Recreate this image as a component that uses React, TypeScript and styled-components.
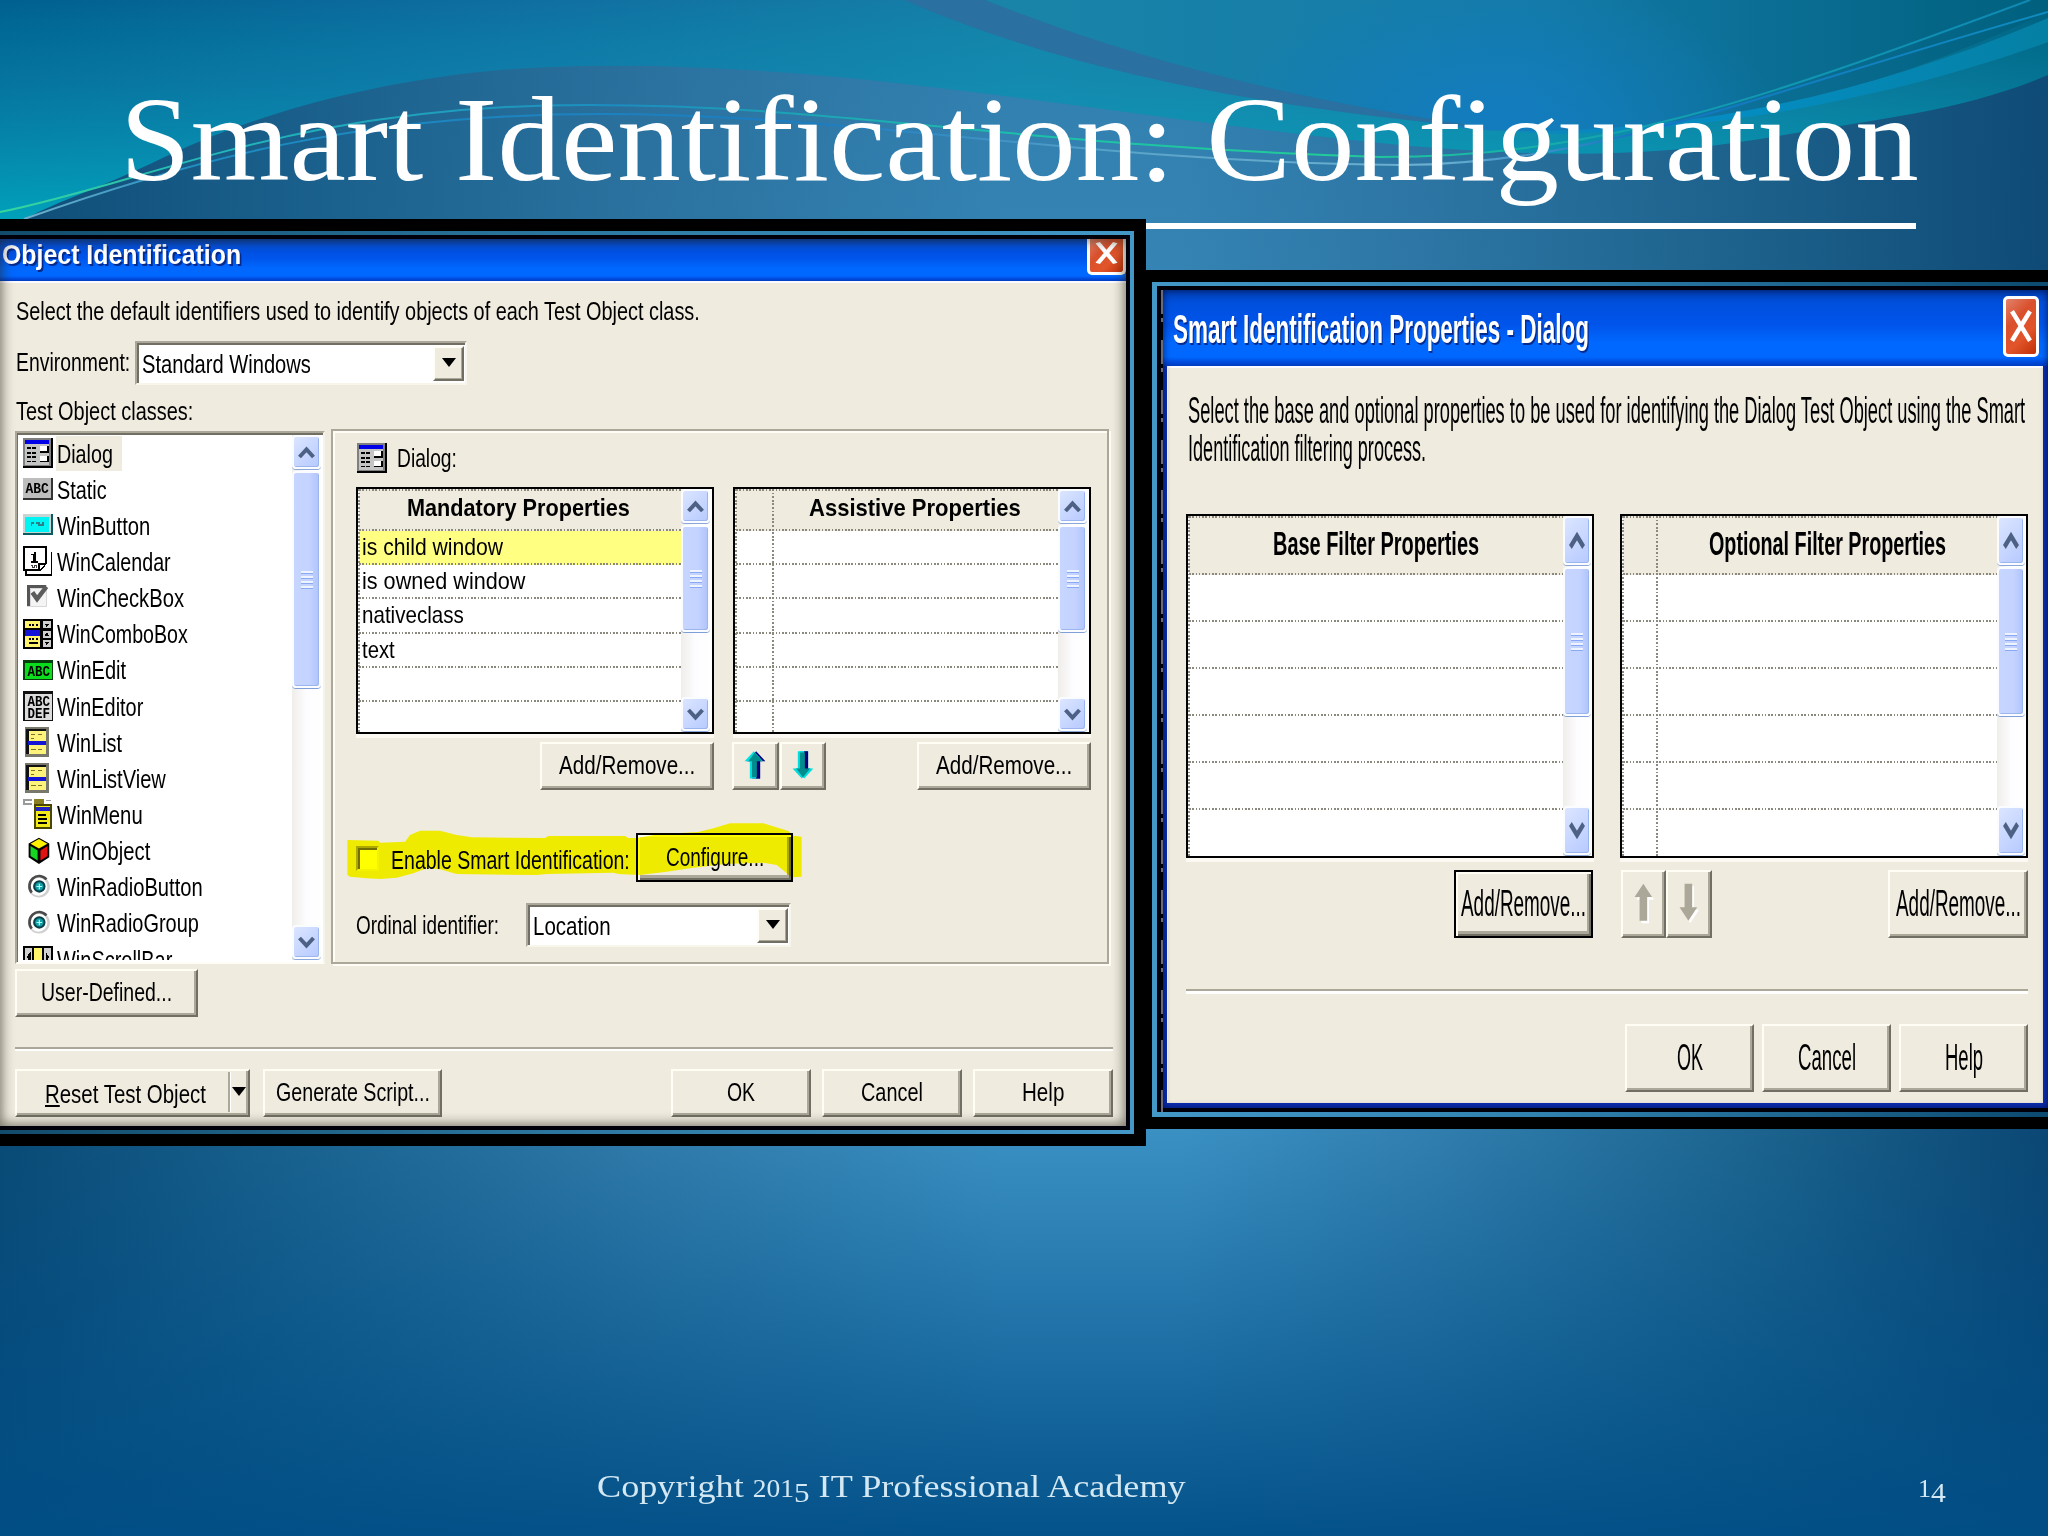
import React, { useLayoutEffect, useRef, useState } from "react";
import styled, { createGlobalStyle, css } from "styled-components";

const face = "#efebdf";
const shade = "#aca899";
const dark = "#716f64";
const light = "#fffdf4";

const GlobalStyle = createGlobalStyle`
  html, body { margin: 0; padding: 0; }
  body { width: 2048px; height: 1536px; overflow: hidden; font-family: "Liberation Sans", Arial, sans-serif; color: #000; }
  *, *::before, *::after { box-sizing: border-box; }
`;

/* ---------- text squeezed to a given width ---------- */

const FitBox = styled.span<{ $w: number; $size: number; $bold?: boolean; $lh?: number }>`
  display: block;
  flex: none;
  width: ${(p) => p.$w}px;
  height: ${(p) => p.$lh ?? Math.round(p.$size * 1.2)}px;
  line-height: ${(p) => p.$lh ?? Math.round(p.$size * 1.2)}px;
  font-size: ${(p) => p.$size}px;
  font-weight: ${(p) => (p.$bold ? 700 : 400)};
  white-space: nowrap;
`;

const FitInner = styled.span`
  display: inline-block;
  transform-origin: 0 50%;
`;

type FitProps = { w: number; size?: number; bold?: boolean; lh?: number; dy?: number; children: React.ReactNode };

function Fit({ w, size = 25, bold, lh, dy = 0, children }: FitProps) {
  const ref = useRef<HTMLSpanElement>(null);
  const [scale, setScale] = useState(1);
  useLayoutEffect(() => {
    if (ref.current) setScale(w / ref.current.offsetWidth);
  }, [w, size]);
  return (
    <FitBox $w={w} $size={size} $bold={bold} $lh={lh}>
      <FitInner ref={ref} style={{ transform: `translateY(${dy}px) scaleX(${scale})` }}>
        {children}
      </FitInner>
    </FitBox>
  );
}

/* ---------- slide ---------- */

const Slide = styled.main`
  position: relative;
  width: 2048px;
  height: 1536px;
  overflow: hidden;
  background:
    linear-gradient(180deg, rgba(0, 80, 136, 0) 1080px, rgba(0, 78, 134, 0.94) 1536px),
    linear-gradient(180deg, rgba(22, 84, 128, 0.36) 0, rgba(22, 84, 128, 0.3) 280px, rgba(22, 84, 128, 0) 900px),
    linear-gradient(90deg, #0b4a74 0, #1c6591 300px, #3580ae 640px, #4198ca 1000px, #4198ca 1180px, #3785b5 1420px, #1f6790 1750px, #0c4672 2048px);
`;

const Backdrop = styled.svg`
  position: absolute;
  inset: 0;
  width: 2048px;
  height: 300px;
`;

const Heading = styled.h1`
  position: absolute;
  left: 127px;
  top: 67px;
  width: 1789px;
  height: 162px;
  margin: 0;
  border-bottom: 6px solid #fff;
  color: #fff;
  font-family: "Liberation Serif", "Times New Roman", serif;
`;

const HeadingText = styled.div`
  margin-left: -7px;
`;

const Footer = styled.footer`
  position: absolute;
  left: 597px;
  right: 102px;
  top: 1466px;
  display: flex;
  justify-content: space-between;
  color: #d3e8f3;
  font-family: "Liberation Serif", "Times New Roman", serif;
`;

const Num = styled.span<{ $drop?: boolean }>`
  font-size: ${(p) => (p.$drop ? 0.86 : 0.76)}em;
  line-height: 0;
  position: relative;
  top: ${(p) => (p.$drop ? "0.17em" : "0")};
`;

/* ---------- window chrome ---------- */

const Frame = styled.section<{ $right?: boolean }>`
  position: absolute;
  background: #000;
  ${(p) =>
    p.$right
      ? css`left: 1141px; top: 270px; width: 907px; height: 859px; padding: 12px 0 12px 11px;`
      : css`left: 0; top: 219px; width: 1146px; height: 927px; padding: 12px 12px 12px 0;`}
`;

const Rim = styled.div<{ $right?: boolean }>`
  height: 100%;
  background: ${(p) =>
    p.$right
      ? "linear-gradient(90deg, #4398c8 0, #2f80ae 45%, #0c4a70 100%)"
      : "linear-gradient(90deg, #124c6c 0, #2c77a0 50%, #4398c8 100%)"};
  padding: ${(p) => (p.$right ? "4px 0 5px 5px" : "4px 4px 4px 0")};
`;

const RimInner = styled.div<{ $right?: boolean }>`
  height: 100%;
  background: #00000a;
  padding: ${(p) => (p.$right ? "4px 0 4px 3px" : "4px 4px 4px 0")};
  ${(p) =>
    p.$right &&
    css`background: repeating-linear-gradient(180deg, #6d6a78 0 24px, #000 24px 28px, #6d6a78 28px 32px, #000 32px 50px) 4px 4px / 2px 100% no-repeat #00000a; padding-left: 6px;`}
`;

const Window = styled.div<{ $right?: boolean }>`
  position: relative;
  height: 100%;
  display: flex;
  flex-direction: column;
  background: ${(p) => (p.$right ? "#0a2fb4" : face)};
  &::after {
    content: "";
    position: absolute;
    inset: 0;
    pointer-events: none;
    box-shadow: ${(p) =>
      p.$right ? "inset 0 0 6px 1px rgba(0,0,40,.55)" : "inset 0 0 12px 2px rgba(40,38,25,.6)"};
  }
`;

const TitleBar = styled.header<{ $right?: boolean }>`
  flex: none;
  display: flex;
  justify-content: space-between;
  height: ${(p) => (p.$right ? 76 : 42)}px;
  padding: ${(p) => (p.$right ? "6px 9px 0 10px" : "0 0 0 2px")};
  color: #fff;
  text-shadow: 2px 2px 0 #062a8c;
  background: linear-gradient(180deg, #003fb4 0, #0050de 18%, #0054ea 45%, #0068ff 70%, #0068ff 88%, #0046d6 96%, #003cc0 100%);
`;

const TitleText = styled.div<{ $top: number }>`
  padding-top: ${(p) => p.$top}px;
`;

const CloseBox = styled.button<{ $right?: boolean }>`
  flex: none;
  width: ${(p) => (p.$right ? 36 : 39)}px;
  height: ${(p) => (p.$right ? 61 : 36)}px;
  padding: 0;
  border: 3px solid #fff;
  border-top-width: ${(p) => (p.$right ? 3 : 0)}px;
  border-radius: ${(p) => (p.$right ? "5px" : "0 0 5px 5px")};
  background: linear-gradient(135deg, #e2836c 0, #d9502c 35%, #e2542a 65%, #c03008 100%);
  svg { display: block; width: 100%; height: 100%; }
`;

const Close = ({ right }: { right?: boolean }) => (
  <CloseBox $right={right}>
    <svg viewBox="0 0 30 54" preserveAspectRatio="none">
      <path d={right ? "M6 12L24 41M24 12L6 41" : "M7 6L23 40M23 6L7 40"} stroke="#fff" strokeWidth="4.5" fill="none" />
    </svg>
  </CloseBox>
);

const Body = styled.div<{ $right?: boolean }>`
  flex: 1;
  display: flex;
  flex-direction: column;
  background: ${face};
  border-top: 2px solid #fbfaff;
  ${(p) =>
    p.$right
      ? css`margin: 0 5px 5px 4px; padding: 24px 15px 0 19px; border-left: 1px solid #fff; padding-left: 18px;`
      : css`padding: 0 13px 0 15px;`}
`;

const Row = styled.div<{ $h: number; $mt?: number; $gap?: number; $pl?: number; $between?: boolean }>`
  flex: none;
  display: flex;
  align-items: center;
  height: ${(p) => p.$h}px;
  margin-top: ${(p) => p.$mt ?? 0}px;
  gap: ${(p) => p.$gap ?? 0}px;
  padding-left: ${(p) => p.$pl ?? 0}px;
  justify-content: ${(p) => (p.$between ? "space-between" : "flex-start")};
`;

const Rule = styled.hr<{ $mt: number; $h: number }>`
  flex: none;
  width: 100%;
  margin: ${(p) => p.$mt}px 0 0;
  height: ${(p) => p.$h}px;
  border: 0;
  border-top: 2px solid ${shade};
  background: #fff;
`;

const Btn = styled.button<{ $w: number; $h?: number; $focus?: boolean }>`
  flex: none;
  display: flex;
  align-items: center;
  justify-content: center;
  width: ${(p) => p.$w}px;
  height: ${(p) => p.$h ?? 48}px;
  padding: 0 0 2px;
  font: inherit;
  color: #000;
  background: ${face};
  border: 2px solid;
  border-color: ${(p) => (p.$focus ? "#000" : `${light} ${dark} ${dark} ${light}`)};
  box-shadow: ${(p) =>
    p.$focus
      ? `inset 2px 2px 0 ${light}, inset -2px -2px 0 ${dark}, inset -4px -5px 0 ${shade}`
      : `inset -2px -2px 0 ${shade}`};
  svg { flex: none; }
`;

const SplitEnd = styled.span`
  flex: none;
  display: flex;
  align-items: center;
  justify-content: center;
  height: 40px;
  width: 20px;
  border-left: 2px solid ${shade};
  box-shadow: inset 1px 0 0 #fff;
`;

const Combo = styled.div<{ $w: number }>`
  flex: none;
  display: flex;
  align-items: center;
  justify-content: space-between;
  width: ${(p) => p.$w}px;
  height: 44px;
  padding: 1px 1px 1px 5px;
  background: #fff;
  border: 2px solid;
  border-color: ${shade} #f8f5ea #f8f5ea ${shade};
  box-shadow: inset 2px 2px 0 ${dark};
`;

const DropBtn = styled.span`
  display: flex;
  align-items: center;
  justify-content: center;
  width: 31px;
  height: 35px;
  background: ${face};
  border: 2px solid;
  border-color: ${light} ${dark} ${dark} ${light};
  box-shadow: inset -1px -1px 0 ${shade};
`;

const Caret = () => (
  <svg width="14" height="10" viewBox="0 0 14 10">
    <path d="M0 0H14L7 9Z" fill="#000" />
  </svg>
);

/* ---------- scrollbar ---------- */

const Track = styled.div<{ $w: number; $mr: number }>`
  flex: none;
  display: flex;
  flex-direction: column;
  width: ${(p) => p.$w}px;
  margin-right: ${(p) => p.$mr}px;
  padding: 0 0 1px;
  background: linear-gradient(90deg, #f0eeea, #fdfcff 50%, #fff);
`;

const Cap = styled.span<{ $h: number; $end?: boolean }>`
  flex: none;
  display: flex;
  align-items: center;
  justify-content: center;
  height: ${(p) => p.$h}px;
  margin-top: ${(p) => (p.$end ? "auto" : 0)};
  border: 2px solid #fbfcff;
  border-radius: 4px;
  background: linear-gradient(135deg, #dbe5ff, #b6caff);
  box-shadow: inset -1px -1px 0 #9db5ee, 0 1px 0 #8ba6d8;
`;

const Thumb = styled.span<{ $h: number }>`
  flex: none;
  display: flex;
  flex-direction: column;
  align-items: center;
  justify-content: center;
  gap: 2px;
  height: ${(p) => p.$h}px;
  margin-top: 2px;
  border: 2px solid #fbfcff;
  border-radius: 4px;
  background: linear-gradient(90deg, #c6d6ff, #c4d3ff 60%, #b0c4fb);
  box-shadow: inset -1px -1px 0 #9db5ee, 0 1px 0 #7f9fd8;
`;

const Grip = styled.i`
  width: 12px;
  height: 3px;
  background: #eef4ff;
  border-bottom: 1px solid #8aa9f5;
`;

function Scroll({ w, cap, thumb, tall, mr = 0 }: { w: number; cap: number; thumb: number; tall?: boolean; mr?: number }) {
  const size = tall ? { width: 16, height: 19 } : { width: 17, height: 13 };
  return (
    <Track $w={w} $mr={mr}>
      <Cap $h={cap}>
        <svg {...size} viewBox="0 0 17 13" preserveAspectRatio="none">
          <path d="M1.5 11L8.5 3.500L15.500 11" fill="none" stroke="#4d6185" strokeWidth="4" />
        </svg>
      </Cap>
      <Thumb $h={thumb}>
        <Grip /><Grip /><Grip /><Grip />
      </Thumb>
      <Cap $h={cap} $end>
        <svg {...size} viewBox="0 0 17 13" preserveAspectRatio="none">
          <path d="M1.5 2L8.500 9.500L15.500 2" fill="none" stroke="#4d6185" strokeWidth="4" />
        </svg>
      </Cap>
    </Track>
  );
}

/* ---------- class list ---------- */

const Main = styled.div`
  flex: none;
  display: flex;
  gap: 6px;
  height: 533px;
`;

const ListBox = styled.div`
  flex: none;
  display: flex;
  width: 310px;
  background: #fff;
  border: 2px solid;
  border-color: ${shade} #f6f3e8 #fffdf6 ${shade};
  box-shadow: inset 1px 2px 0 ${dark};
  padding: 2px 2px 2px 1px;
`;

const List = styled.ul`
  flex: 1;
  margin: 0;
  padding: 0 0 0 5px;
  list-style: none;
  overflow: hidden;
`;

const Item = styled.li`
  display: flex;
  align-items: center;
  height: 36.15px;
  gap: 3px;
  svg { flex: none; display: block; overflow: visible; }
`;

const ItemLabel = styled.span<{ $on?: boolean }>`
  display: flex;
  align-items: center;
  height: 35px;
  padding: 1px 9px 0 1px;
  background: ${(p) => (p.$on ? face : "transparent")};
`;

const Ico = ({ children, size = 30 }: { children: React.ReactNode; size?: number }) => (
  <svg width={size} height={size} viewBox="0 0 16 16" shapeRendering="crispEdges">
    {children}
  </svg>
);

const DialogIcon = () => (
  <Ico>
    <path d="M0 0H16V16H0Z" fill="#000" />
    <path d="M0 0H15V15H0Z" fill="#808080" />
    <path d="M1 1H14V14.4H1Z" fill="#c4c4c4" />
    <path d="M1 .8H14V3H1Z" fill="#0000e8" />
    <path d="M2 5H4V6H2ZM5 5H7V6H5ZM2 7.5H4V8.500H2ZM5 7.500H7V8.500H5ZM2 9.500H4V10.500H2ZM5 9.500H7V10.500H5ZM2 12H4V13H2ZM5 12H7V13H5Z" fill="#000" />
    <path d="M9 4.500H13V7H9ZM9 9.500H13V12H9Z" fill="#fff" />
    <path d="M13 4.500H14V8H9V7H13ZM13 9.500H14V13H9V12H13Z" fill="#000" />
  </Ico>
);

const IconText = styled.text`
  font-family: "Liberation Mono", monospace;
  font-weight: 700;
`;

const StaticIcon = () => (
  <Ico>
    <path d="M0 2H16V14H0Z" fill="#333" />
    <path d="M0 2H15V13H0Z" fill="#bdbdbd" />
    <IconText x="1.300" y="10.300" fontSize="7.600" textLength="12.500" lengthAdjust="spacingAndGlyphs">ABC</IconText>
  </Ico>
);

const ButtonIcon = () => (
  <Ico>
    <path d="M0 2H16V13.500H0Z" fill="#0b5c60" />
    <path d="M0 2H15V12.500H0Z" fill="#c8d4d4" />
    <path d="M1 3.500H14V11.500H1Z" fill="#00f4f4" />
    <path d="M4 6.500H6V7.500H7V6.500H9V7.500H10V6.500H11V8.500H8V7.500H5V8.500H4Z" fill="#2b7f86" />
  </Ico>
);

const CalendarIcon = () => (
  <Ico>
    <path d="M1.500 3V15.400H15.200V3" fill="#fff" stroke="#000" strokeWidth="1" />
    <path d="M.5 .5H12.500V9L9 13H.5Z" fill="#fff" stroke="#000" strokeWidth="1.100" />
    <path d="M8.500 13V9.500H12.500" fill="#fff" stroke="#000" strokeWidth="1.200" />
    <path d="M4.500 4H6V3H7V8H8V9H4.500V8H5.500V5H4.500Z" fill="#000" />
    <path d="M4 10.500H5V11.500H6V10.500H7V11.500" fill="none" stroke="#444" strokeWidth=".6" />
  </Ico>
);

const CheckIcon = () => (
  <Ico>
    <path d="M2 1H13V13H2Z" fill="#d8d8d8" />
    <path d="M2 1H12V2.500H3.700V12H2Z" fill="#555" />
    <path d="M4 3H12V12H4Z" fill="#f4f4f4" />
    <path d="M5 5L7.500 8.500L12.500 2" fill="none" stroke="#5c5c5c" strokeWidth="2.400" shapeRendering="auto" />
  </Ico>
);

const ComboIcon = () => (
  <Ico>
    <path d="M0 0H16V16H0Z" fill="#000" />
    <path d="M1 1.200H9V5H1ZM1 9H9V15H1Z" fill="#fff36b" />
    <path d="M1 6H9V9H1Z" fill="#1414d8" />
    <path d="M10.500 1.200H15V5H10.500ZM10.500 6.500H15V10H10.500ZM10.500 11H15V15H10.500Z" fill="#cfcfcf" />
    <path d="M3 2.800H4V3.800H3ZM5 2.800H6V3.800H5ZM7 2.800H8V3.800H7ZM3 10.300H4V11.300H3ZM5 10.300H6V11.300H5ZM7 10.300H8V11.300H7ZM3 12.500H8V13.300H3ZM11.500 2.500H14L12.700 4.500ZM11.500 9L12.700 7L14 9ZM11.500 12L12.700 14L14 12Z" fill="#000" />
  </Ico>
);

const EditIcon = () => (
  <Ico>
    <path d="M0 2.500H16V13.500H0Z" fill="#083c0c" />
    <path d="M1.300 4H15.500V12.800H1.300Z" fill="#0ade1c" />
    <IconText x="2.400" y="11" fontSize="7.600" textLength="12" lengthAdjust="spacingAndGlyphs">ABC</IconText>
  </Ico>
);

const EditorIcon = () => (
  <Ico>
    <path d="M0 0H16V16H0Z" fill="#111" />
    <path d="M1.300 1.600H15.400V15.600H1.300Z" fill="#dcdcdc" />
    <IconText x="2.400" y="8" fontSize="7.400" textLength="12" lengthAdjust="spacingAndGlyphs">ABC</IconText>
    <IconText x="2.400" y="14.600" fontSize="7.400" textLength="12" lengthAdjust="spacingAndGlyphs">DEF</IconText>
  </Ico>
);

const ListIcon = () => (
  <Ico>
    <path d="M1 0H14V16H1Z" fill="#77776c" />
    <path d="M1.700 1H12.500V14.500H1.700Z" fill="#111" />
    <path d="M3 2H12.500V14.500H3Z" fill="#fdf27a" />
    <path d="M2.500 7.500H12V9.800H2.500Z" fill="#1414d8" />
    <path d="M4 3.500H6.500V4.300H4ZM8 3.500H10V4.300H8ZM4 5.700H6V6.500H4ZM4 11.700H7V12.500H4ZM8 11.700H10V12.500H8Z" fill="#7d742a" />
  </Ico>
);

const MenuIcon = () => (
  <Ico>
    <path d="M0 0H5V3H0Z" fill="#9a9a9a" />
    <path d="M1 1H5V2H1Z" fill="#fff" />
    <path d="M6 0H11V3H6Z" fill="#8a7f22" />
    <path d="M12 .3H15V1.300H12Z" fill="#a0a0a8" />
    <path d="M6 2.500H15.500V16H6Z" fill="#4a4600" />
    <path d="M7 3.500H14.300V15H7Z" fill="#f2ea18" />
    <path d="M7 4.500H14.300V6.300H7Z" fill="#2222c4" />
    <path d="M8 8H12V9H8ZM8 10.200H13V11.200H8ZM8 12.500H13V13.500H8Z" fill="#000" />
  </Ico>
);

const CubeIcon = () => (
  <svg width="30" height="30" viewBox="0 0 16 16">
    <path d="M8.500 1.500L13.500 4.300V11L8.500 14.300L3.500 11V4.300Z" fill="#000" stroke="#000" />
    <path d="M8.500 1.600L13 4.100L8.500 6.700L4 4.100Z" fill="#fff200" />
    <path d="M4 5.300L7.800 7.700V13.100L4 10.600Z" fill="#17d322" />
    <path d="M13.100 5.300L9.300 7.700V13.100L13.100 10.600Z" fill="#e01212" />
  </svg>
);

const RadioIcon = () => (
  <svg width="30" height="30" viewBox="0 0 16 16">
    <circle cx="8.500" cy="7.800" r="5.800" fill="#cfcfcf" />
    <circle cx="8.200" cy="7.800" r="4.800" fill="#fff" />
    <path d="M4.700 11A5 5.200 0 0 1 12.500 4" fill="none" stroke="#4a4a4a" strokeWidth="1.400" />
    <circle cx="8.700" cy="7.700" r="3.300" fill="#083f48" />
    <circle cx="8.700" cy="7.700" r="2.200" fill="#12a0a8" />
    <path d="M8.700 6.200V9.200M7.200 7.700H10.200" stroke="#aff" strokeWidth=".6" />
  </svg>
);

const ScrollIcon = () => (
  <Ico>
    <path d="M0 1H16V15H0Z" fill="#000" />
    <path d="M1 2.200H5V14H1ZM11 2.200H15V14H11Z" fill="#d0d0d0" />
    <path d="M6 2.200H10V14H6Z" fill="#fff36b" />
    <path d="M4 4V10L2 7ZM12 4V10L14 7Z" fill="#000" />
  </Ico>
);

const classes: [string, number, () => React.ReactElement][] = [
  ["Dialog", 56, DialogIcon],
  ["Static", 50, StaticIcon],
  ["WinButton", 93, ButtonIcon],
  ["WinCalendar", 114, CalendarIcon],
  ["WinCheckBox", 127, CheckIcon],
  ["WinComboBox", 131, ComboIcon],
  ["WinEdit", 69, EditIcon],
  ["WinEditor", 86, EditorIcon],
  ["WinList", 65, ListIcon],
  ["WinListView", 109, ListIcon],
  ["WinMenu", 86, MenuIcon],
  ["WinObject", 93, CubeIcon],
  ["WinRadioButton", 146, RadioIcon],
  ["WinRadioGroup", 142, RadioIcon],
  ["WinScrollBar", 115, ScrollIcon],
];

/* ---------- property grids ---------- */

const hDots = "repeating-linear-gradient(90deg, #8b887e 0 1.6px, transparent 1.6px 3.3px)";
const vDots = "repeating-linear-gradient(180deg, #8b887e 0 1.8px, transparent 1.8px 3.6px)";

const Group = styled.div`
  flex: none;
  position: relative;
  width: 778px;
  height: 535px;
  margin-top: -2px;
  border: 2px solid ${shade};
  box-shadow: inset 2px 2px 0 #fffdf6, 2px 2px 0 #fffdf6;
  padding: 12px 16px 0 23px;
`;

const GridBox = styled.div<{ $w: number; $h: number }>`
  flex: none;
  display: flex;
  width: ${(p) => p.$w}px;
  height: ${(p) => p.$h}px;
  border: 2px solid #000;
  box-shadow: 0 4px 0 #fbf9f2;
  background: #fff;
`;

const Cells = styled.div<{ $split?: number }>`
  position: relative;
  flex: 1;
  overflow: hidden;
  padding-left: 1px;
  &::before, &::after {
    content: "";
    position: absolute;
    top: 0;
    bottom: 0;
    left: 0;
    width: 2px;
    background: ${vDots};
  }
  &::after { left: ${(p) => p.$split ?? 0}px; }
`;

const Head = styled.div<{ $h: number; $pl: number }>`
  height: ${(p) => p.$h}px;
  padding-left: ${(p) => p.$pl}px;
  display: flex;
  align-items: center;
  background: ${hDots} 0 100% / 100% 2px no-repeat, ${hDots} 0 0 / 100% 2px no-repeat, ${face};
`;

const Cell = styled.div<{ $h: number; $on?: boolean }>`
  height: ${(p) => p.$h}px;
  padding: 0 0 3px 3px;
  display: flex;
  align-items: center;
  background: ${hDots} 0 100% / 100% 2px no-repeat, ${(p) => (p.$on ? "#ffff82" : "#fff")};
`;

type GridProps = {
  tall?: boolean;
  title: string;
  titleW: number;
  titlePad: number;
  split?: number;
  rows?: [string, number][];
};

function PropGrid({ tall, title, titleW, titlePad, split, rows = [] }: GridProps) {
  const rowH = tall ? 47.1 : 34.2;
  return (
    <GridBox $w={tall ? 408 : 358} $h={tall ? 344 : 247}>
      <Cells $split={split}>
        <Head $h={tall ? 59 : 42} $pl={titlePad}>
          <Fit w={titleW} size={tall ? 33 : 24} bold dy={tall ? -2 : -3}>{title}</Fit>
        </Head>
        {[0, 1, 2, 3, 4, 5].map((i) => (
          <Cell key={i} $h={rowH} $on={i === 0 && rows.length > 0}>
            {rows[i] && <Fit w={rows[i][1]} size={24}>{rows[i][0]}</Fit>}
          </Cell>
        ))}
      </Cells>
      <Scroll w={tall ? 28 : 29} cap={tall ? 49 : 34} thumb={tall ? 149 : 107} tall={tall} mr={tall ? 1 : 2} />
    </GridBox>
  );
}

const CheckRow = styled.div`
  display: flex;
  align-items: center;
  height: 49px;
  margin-top: 43px;
`;

const CheckBox = styled.span`
  width: 23px;
  height: 25px;
  margin: 2px 12px 0 0;
  background: #fff;
  border: 2px solid;
  border-color: ${shade} #f5f2e6 #f5f2e6 ${shade};
  box-shadow: inset 2px 2px 0 ${dark};
`;

const Marker = styled.svg`
  position: absolute;
  left: -3px;
  top: 369px;
  width: 500px;
  height: 180px;
  mix-blend-mode: multiply;
  pointer-events: none;
`;

const Arrow = ({ down, off }: { down?: boolean; off?: boolean }) => {
  const shape = "M7 0L14 8H10V22H4V8H0Z";
  return (
    <svg width={off ? 24 : 25} height={off ? 42 : 31} viewBox="-2 -1 19 25" preserveAspectRatio="none">
      <g transform={down ? "translate(0 22) scale(1 -1)" : undefined}>
        <path d={shape} fill={off ? "#fff" : down ? "#00dcdc" : "#00007c"} transform={off ? `translate(1.5 ${down ? -1.5 : 1.5})` : "translate(1 0)"} />
        {!off && <path d={shape} fill={down ? "#00dcdc" : "#00e0e0"} transform="translate(-.8 0)" />}
        {!off && <path d="M8 6H11V22H8Z" fill="#00007c" />}
        <path d={off ? shape : "M7 1L12.500 8H8.500V21H4.800V8H2Z"} fill={off ? shade : "#008c8c"} />
      </g>
    </svg>
  );
};

const Paragraph = styled.div`
  flex: none;
  height: 75px;
  padding-left: 2px;
`;

const Gap = styled.span<{ $w: number }>`
  flex: none;
  width: ${(p) => p.$w}px;
`;

/* ---------- dialogs ---------- */

function ObjectIdentification() {
  return (
    <Frame>
      <Rim>
        <RimInner>
          <Window>
            <TitleBar>
              <TitleText $top={0}><Fit w={239} size={28} bold lh={31}>Object Identification</Fit></TitleText>
              <Close />
            </TitleBar>
            <Body>
              <Row $h={56} $pl={1}>
                <Fit w={684}>Select the default identifiers used to identify objects of each Test Object class.</Fit>
              </Row>
              <Row $h={48} $gap={5} $pl={1}>
                <Fit w={114} dy={-1}>Environment:</Fit>
                <Combo $w={332}>
                  <Fit w={169} dy={1}>Standard Windows</Fit>
                  <DropBtn><Caret /></DropBtn>
                </Combo>
              </Row>
              <Row $h={44} $pl={1}>
                <Fit w={177} dy={2}>Test Object classes:</Fit>
              </Row>
              <Main>
                <ListBox>
                  <List>
                    {classes.map(([name, w, Icon], i) => (
                      <Item key={name}>
                        <Icon />
                        <ItemLabel $on={i === 0}><Fit w={w}>{name}</Fit></ItemLabel>
                      </Item>
                    ))}
                  </List>
                  <Scroll w={29} cap={34} thumb={217} />
                </ListBox>
                <Group>
                  <Row $h={30} $gap={10} $pl={1}>
                    <DialogIcon />
                    <Fit w={60}>Dialog:</Fit>
                  </Row>
                  <Row $h={247} $mt={14} $gap={19}>
                    <PropGrid
                      title="Mandatory Properties" titleW={223} titlePad={48}
                      rows={[["is child window", 141], ["is owned window", 163], ["nativeclass", 102], ["text", 33]]}
                    />
                    <PropGrid title="Assistive Properties" titleW={212} titlePad={73} split={37} />
                  </Row>
                  <Row $h={48} $mt={8} $pl={184}>
                    <Btn $w={174}><Fit w={136}>Add/Remove...</Fit></Btn>
                    <Gap $w={18} />
                    <Btn $w={47}><Arrow /></Btn>
                    <Gap $w={1} />
                    <Btn $w={46}><Arrow down /></Btn>
                    <Gap $w={91} />
                    <Btn $w={174}><Fit w={136}>Add/Remove...</Fit></Btn>
                  </Row>
                  <CheckRow>
                    <CheckBox />
                    <Fit w={239} dy={2}>Enable Smart Identification:</Fit>
                    <Gap $w={6} />
                    <Btn $w={157} $h={49} $focus><Fit w={98}>Configure...</Fit></Btn>
                  </CheckRow>
                  <Row $h={44} $mt={21}>
                    <Fit w={143}>Ordinal identifier:</Fit>
                    <Gap $w={27} />
                    <Combo $w={265}>
                      <Fit w={78} dy={1}>Location</Fit>
                      <DropBtn><Caret /></DropBtn>
                    </Combo>
                  </Row>
                  <Marker viewBox="0 0 1500 540">
                    <path
                      fill="#ffff00"
                      d="M52 120L145 122L150 128L225 125L240 105L270 92L330 92L380 105L425 112L645 114L655 108L885 108L895 114L920 114L985 103L1105 96L1150 85L1200 70L1300 70L1375 93L1390 107L1415 110V230L1385 232L1340 195L1300 188L1250 190L1185 192L1080 205L1010 215L930 225L865 222L850 218L650 222L620 225L380 222L330 208L290 205L250 220L200 233L150 237L110 235L60 230L52 225Z"
                    />
                  </Marker>
                </Group>
              </Main>
              <Row $h={48} $mt={5}>
                <Btn $w={183}><Fit w={131}>User-Defined...</Fit></Btn>
              </Row>
              <Rule $mt={30} $h={4} />
              <Row $h={48} $mt={18}>
                <Btn $w={235}>
                  <Gap $w={28} />
                  <Fit w={161} dy={2}><u>R</u>eset Test Object</Fit>
                  <Gap $w={22} />
                  <SplitEnd><Caret /></SplitEnd>
                </Btn>
                <Gap $w={13} />
                <Btn $w={179}><Fit w={154}>Generate Script...</Fit></Btn>
                <Gap $w={229} />
                <Btn $w={140}><Fit w={28}>OK</Fit></Btn>
                <Gap $w={11} />
                <Btn $w={140}><Fit w={62}>Cancel</Fit></Btn>
                <Gap $w={11} />
                <Btn $w={140}><Fit w={42}>Help</Fit></Btn>
              </Row>
            </Body>
          </Window>
        </RimInner>
      </Rim>
    </Frame>
  );
}

function SmartIdentification() {
  return (
    <Frame $right>
      <Rim $right>
        <RimInner $right>
          <Window $right>
            <TitleBar $right>
              <TitleText $top={9}><Fit w={416} size={40} bold lh={48}>Smart Identification Properties - Dialog</Fit></TitleText>
              <Close right />
            </TitleBar>
            <Body $right>
              <Paragraph>
                <Fit w={837} size={36} lh={37.5}>
                  Select the base and optional properties to be used for identifying the Dialog Test Object using the Smart
                </Fit>
                <Fit w={238} size={36} lh={37.5}>Identification filtering process.</Fit>
              </Paragraph>
              <Row $h={344} $mt={47} $between>
                <PropGrid tall title="Base Filter Properties" titleW={206} titlePad={84} />
                <PropGrid tall title="Optional Filter Properties" titleW={237} titlePad={86} split={34} />
              </Row>
              <Row $h={68} $mt={12} $pl={268}>
                <Btn $w={139} $h={68} $focus><Fit w={125} size={36}>Add/Remove...</Fit></Btn>
                <Gap $w={28} />
                <Btn $w={45} $h={68}><Arrow off /></Btn>
                <Btn $w={46} $h={68}><Arrow down off /></Btn>
                <Gap $w={176} />
                <Btn $w={140} $h={68}><Fit w={125} size={36}>Add/Remove...</Fit></Btn>
              </Row>
              <Rule $mt={51} $h={5} />
              <Row $h={68} $mt={30} $pl={439}>
                <Btn $w={129} $h={68}><Fit w={26} size={36}>OK</Fit></Btn>
                <Gap $w={8} />
                <Btn $w={129} $h={68}><Fit w={58} size={36}>Cancel</Fit></Btn>
                <Gap $w={8} />
                <Btn $w={129} $h={68}><Fit w={38} size={36}>Help</Fit></Btn>
              </Row>
            </Body>
          </Window>
        </RimInner>
      </Rim>
    </Frame>
  );
}

/* ---------- slide artwork ---------- */

const Waves = () => (
  <Backdrop viewBox="0 0 2048 300">
    <defs>
      <linearGradient id="sky" x1="0" y1="0" x2="1" y2="0">
        <stop offset="0" stopColor="#00608f" />
        <stop offset=".25" stopColor="#0f6ea0" />
        <stop offset=".5" stopColor="#1680a8" />
        <stop offset=".75" stopColor="#12789c" />
        <stop offset="1" stopColor="#005f80" />
      </linearGradient>
      <linearGradient id="glow" x1="0" y1="0" x2="0" y2="1">
        <stop offset="0" stopColor="#00b4c4" stopOpacity="0" />
        <stop offset=".35" stopColor="#10a0c0" stopOpacity=".3" />
        <stop offset="1" stopColor="#00b0c4" stopOpacity=".82" />
      </linearGradient>
      <linearGradient id="bowl" x1="0" y1="0" x2="1" y2="0">
        <stop offset="0" stopColor="#1a84a8" />
        <stop offset=".5" stopColor="#147ba8" />
        <stop offset="1" stopColor="#00607e" />
      </linearGradient>
      <radialGradient id="blue" cx="1500" cy="125" r="280" gradientUnits="userSpaceOnUse" gradientTransform="translate(0 60) scale(1 .52)">
        <stop offset="0" stopColor="#137cc0" />
        <stop offset="1" stopColor="#137cc0" stopOpacity="0" />
      </radialGradient>
      <linearGradient id="band" x1="1450" y1="0" x2="2048" y2="0" gradientUnits="userSpaceOnUse">
        <stop offset="0" stopColor="#0f86bc" />
        <stop offset=".5" stopColor="#048cc0" />
        <stop offset="1" stopColor="#0580a4" />
      </linearGradient>
      <linearGradient id="line" x1="0" y1="0" x2="2048" y2="0" gradientUnits="userSpaceOnUse">
        <stop offset="0" stopColor="#36d79c" />
        <stop offset=".1" stopColor="#22b8b8" />
        <stop offset=".3" stopColor="#1c8cc0" />
        <stop offset=".5" stopColor="#1cc0a8" />
        <stop offset=".65" stopColor="#22cc98" />
        <stop offset=".8" stopColor="#12a0b0" />
        <stop offset="1" stopColor="#0e88b4" />
      </linearGradient>
      <linearGradient id="line2" x1="0" y1="0" x2="2048" y2="0" gradientUnits="userSpaceOnUse">
        <stop offset="0" stopColor="#7ab4cc" />
        <stop offset=".1" stopColor="#1c8cc0" />
        <stop offset=".4" stopColor="#1c7cc0" />
        <stop offset=".55" stopColor="#5aa4c8" />
        <stop offset=".7" stopColor="#6cb0d0" />
        <stop offset=".8" stopColor="#1474c0" />
        <stop offset="1" stopColor="#0e8cc0" />
      </linearGradient>
    </defs>
    <path d="M0 0H2048V75C1960 112 1880 118 1760 139C1640 158 1540 157 1400 145C1230 128 1080 105 940 88C780 68 600 58 470 73C330 90 230 125 150 164C90 192 50 204 20 222H0Z" fill="url(#sky)" />
    <path d="M0 0H2048V75C1960 112 1880 118 1760 139C1640 158 1540 157 1400 145C1230 128 1080 105 940 88C780 68 600 58 470 73C330 90 230 125 150 164C90 192 50 204 20 222H0Z" fill="url(#glow)" />
    <path d="M985 0C1130 62 1290 106 1480 130C1720 138 1880 90 2048 12V0Z" fill="url(#bowl)" />
    <path d="M985 0C1130 62 1290 106 1480 130C1720 138 1880 90 2048 12V0Z" fill="url(#blue)" />
    <path d="M905 0C1040 60 1230 106 1490 128C1290 100 1130 58 985 0Z" fill="#2a70a0" />
    <path d="M1500 131C1700 134 1880 90 2048 18V42C1900 96 1720 130 1560 134Z" fill="url(#band)" />
    <path d="M0 212C150 182 300 104 590 105C840 105 1020 146 1380 157C1600 157 1760 100 2030 0" fill="none" stroke="url(#line)" strokeWidth="2" />
    <path d="M24 219C190 160 360 114 600 114C860 114 1080 162 1400 165C1600 164 1750 96 2048 12" fill="none" stroke="url(#line2)" strokeWidth="2" />
  </Backdrop>
);

export default function App() {
  return (
    <>
      <GlobalStyle />
      <Slide>
        <Waves />
        <Heading>
          <HeadingText>
            <Fit w={1799} size={121} lh={144}>Smart Identification: Configuration</Fit>
          </HeadingText>
        </Heading>
        <ObjectIdentification />
        <SmartIdentification />
        <Footer>
          <Fit w={589} size={32} lh={40}>
            Copyright <Num>2</Num><Num>0</Num><Num>1</Num><Num $drop>5</Num> IT Professional Academy
          </Fit>
          <Fit w={28} size={32} lh={40}><Num>1</Num><Num $drop>4</Num></Fit>
        </Footer>
      </Slide>
    </>
  );
}
